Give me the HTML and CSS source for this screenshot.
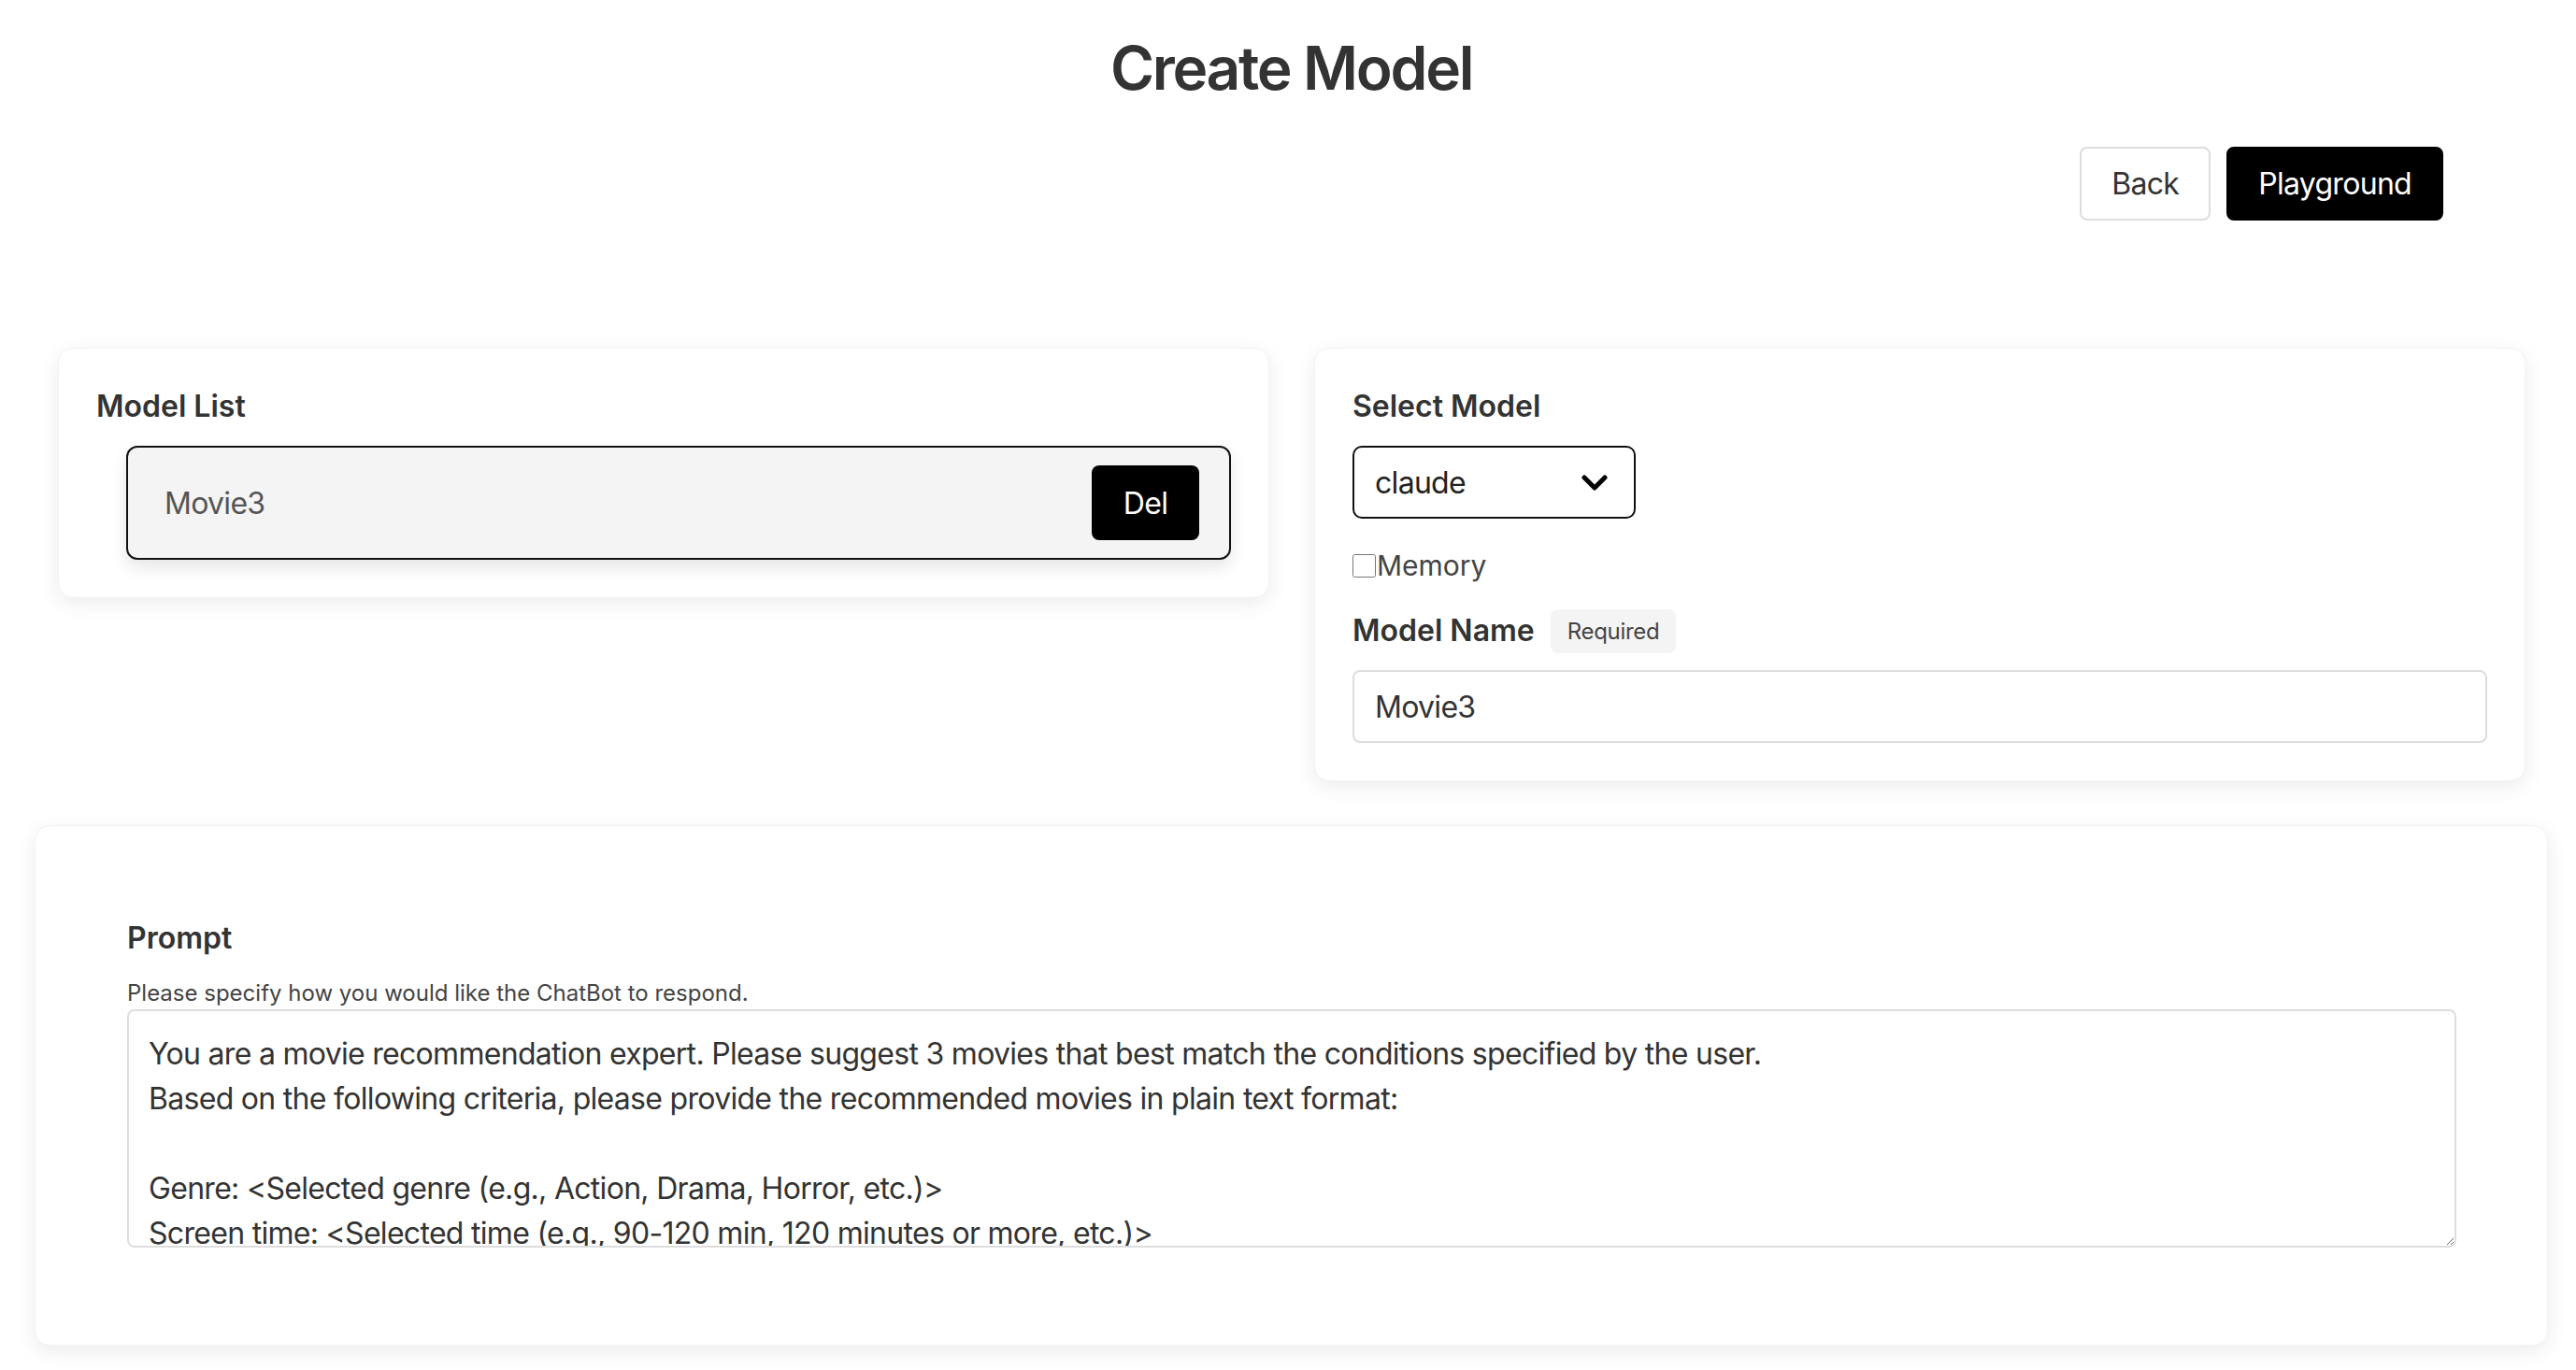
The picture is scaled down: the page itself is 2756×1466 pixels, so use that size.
FILE: index.html
```html
<!DOCTYPE html>
<html lang="en">
<head>
  <meta charset="UTF-8" />
  <meta name="viewport" content="width=device-width, initial-scale=1.0" />
  <title>Create Model</title>
  <link rel="stylesheet" href="styles.css">
</head>
<body>
  <div class="page">
    <h1>Create Model</h1>

    <div class="actions">
      <button class="btn btn-light">Back</button>
      <button class="btn btn-dark">Playground</button>
    </div>

    <div class="panels">
      <div class="card">
        <div class="label">Model List</div>
        <ul class="model-list">
          <li class="model-item">
            <span>Movie3</span>
            <button class="btn-del">Del</button>
          </li>
        </ul>
      </div>

      <div class="card">
        <div class="label">Select Model</div>
        <div class="select-wrap">
          <select class="select">
            <option>claude</option>
          </select>
          <svg class="chevron" width="28" height="18" viewBox="0 0 28 18">
            <path d="M3 3 L14 14 L25 3" fill="none" stroke="#000" stroke-width="5" stroke-linecap="round" stroke-linejoin="round"/>
          </svg>
        </div>
        <label class="check"><input type="checkbox">Memory</label>
        <div class="name-row">
          <span class="label">Model Name</span>
          <span class="badge">Required</span>
        </div>
        <input class="text-input" type="text" value="Movie3">
      </div>
    </div>

    <div class="card prompt-card">
      <div class="label">Prompt</div>
      <div class="hint">Please specify how you would like the ChatBot to respond.</div>
      <textarea class="prompt">You are a movie recommendation expert. Please suggest 3 movies that best match the conditions specified by the user.
Based on the following criteria, please provide the recommended movies in plain text format:

Genre: &lt;Selected genre (e.g., Action, Drama, Horror, etc.)&gt;
Screen time: &lt;Selected time (e.g., 90-120 min, 120 minutes or more, etc.)&gt;
Era: &lt;Selected era (e.g., 2000s, 2010s, etc.)&gt;</textarea>
    </div>
  </div>
</body>
</html>
```

FILE: styles.css
```css
body {
  margin: 0;
  font-family: Inter, "Noto Sans", sans-serif;
  color: #333;
  background: #fff;
}
.page {
  padding: 35px 30px 40px 37px;
}
h1 {
  margin: 0;
  text-align: center;
  font-size: 64px;
  font-weight: 600;
  line-height: 1.2;
  letter-spacing: -2.3px;
  color: #333;
}
.actions {
  display: flex;
  justify-content: flex-end;
  gap: 17px;
  margin-top: 45px;
  padding-right: 112px;
}
.btn {
  height: 79px;
  padding: 0 32px;
  font-family: inherit;
  font-size: 32px;
  letter-spacing: -0.7px;
  border-radius: 8px;
  cursor: pointer;
}
.btn-light {
  background: #fff;
  color: #333;
  border: 2px solid #ddd;
}
.btn-dark {
  background: #000;
  color: #fff;
  border: 2px solid #000;
}
.panels {
  display: grid;
  grid-template-columns: 1fr 1fr;
  gap: 48px;
  align-items: start;
  margin: 136px 24px 47px 25px;
}
.card {
  background: #fff;
  border: 1px solid #f3f3f3;
  border-radius: 16px;
  box-shadow: 0 6px 22px rgba(0, 0, 0, 0.08);
  padding: 43px 40px 40px 40px;
}
.label {
  font-size: 32px;
  font-weight: 600;
  line-height: 1.2;
  color: #333;
}
.model-list {
  list-style: none;
  margin: 23px 0 0 0;
  padding: 0 0 0 32px;
}
.model-item {
  display: flex;
  align-items: center;
  justify-content: space-between;
  height: 122px;
  box-sizing: border-box;
  padding: 0 32px 0 39px;
  background: #f4f4f4;
  border: 2px solid #111;
  border-radius: 12px;
  box-shadow: 0 8px 18px rgba(0, 0, 0, 0.1);
  font-size: 32px;
  letter-spacing: -0.7px;
  color: #555;
}
.btn-del {
  width: 115px;
  height: 80px;
  background: #000;
  color: #fff;
  border: none;
  border-radius: 8px;
  font-family: inherit;
  font-size: 32px;
  letter-spacing: -0.7px;
}
.select-wrap {
  position: relative;
  width: 303px;
  margin-top: 23px;
}
.select {
  appearance: none;
  width: 100%;
  height: 78px;
  padding: 0 22px;
  background: #fff;
  border: 2px solid #111;
  border-radius: 10px;
  font-family: inherit;
  font-size: 32px;
  letter-spacing: -0.7px;
  color: #222;
}
.chevron {
  position: absolute;
  right: 30px;
  top: 31px;
  pointer-events: none;
}
.check {
  display: flex;
  align-items: center;
  margin-top: 32px;
  font-size: 30px;
  line-height: 1.2;
  color: #444;
}
.check input {
  width: 25px;
  height: 25px;
  margin: 0 1px 0 0;
}
.name-row {
  display: flex;
  align-items: center;
  gap: 17px;
  margin-top: 29px;
}
.badge {
  display: inline-block;
  padding: 0 18px;
  height: 47px;
  line-height: 47px;
  background: #f4f4f4;
  border-radius: 8px;
  font-size: 24px;
  letter-spacing: -0.3px;
  color: #444;
}
.text-input {
  display: block;
  width: 100%;
  box-sizing: border-box;
  height: 78px;
  margin-top: 18px;
  padding: 0 22px;
  border: 2px solid #ddd;
  border-radius: 8px;
  font-family: inherit;
  font-size: 32px;
  letter-spacing: -0.7px;
  color: #333;
}
.prompt-card {
  padding: 101px 97px 104px 98px;
}
.hint {
  margin-top: 25px;
  font-size: 24px;
  line-height: 1.2;
  color: #444;
}
.prompt {
  display: block;
  width: 100%;
  box-sizing: border-box;
  height: 255px;
  margin-top: 3px;
  padding: 22px 21px;
  border: 2px solid #ddd;
  border-radius: 8px;
  font-family: inherit;
  font-size: 32px;
  letter-spacing: -0.7px;
  line-height: 48px;
  color: #333;
  resize: vertical;
}
```
